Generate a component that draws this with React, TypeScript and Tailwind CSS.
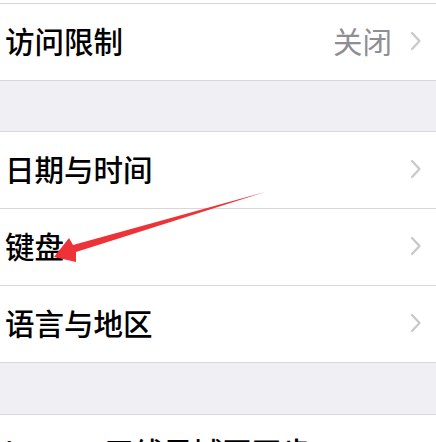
import React from "react";

const Chevron = () => (
  <svg width="12" height="20" viewBox="0 0 12 20" className="shrink-0">
    <path d="M2 2 L9.5 10 L2 18" fill="none" stroke="#c7c7cc" strokeWidth="2.2" strokeLinecap="round" strokeLinejoin="round" />
  </svg>
);

const Row = ({ label, value, last }: { label: string; value?: string; last?: boolean }) => (
  <div className={`flex h-[77px] items-center justify-between bg-white pb-[3px] pl-[5px] pr-[14px] ${last ? "" : "border-b border-[#d8d8dc]"}`}>
    <span className="text-[29.5px] font-medium leading-none text-black">{label}</span>
    <div className="flex items-center gap-[18px]">
      {value && <span className="text-[29.5px] leading-none text-[#8e8e93]">{value}</span>}
      <Chevron />
    </div>
  </div>
);

export default function App() {
  return (
    <div
      className="relative h-[442px] w-[436px] overflow-hidden bg-[#efeff4]"
      style={{ fontFamily: '"Noto Sans CJK SC", "Noto Sans", sans-serif' }}
    >
      <div className="h-[4px] border-b border-[#d8d8dc] bg-white" />
      <Row label="访问限制" value="关闭" />
      <div className="h-[50px]" />
      <div className="border-t border-[#d8d8dc]">
        <Row label="日期与时间" />
        <Row label="键盘" />
        <Row label="语言与地区" />
      </div>
      <div className="h-[51px]" />
      <div className="border-t border-[#d8d8dc]">
        <Row label="iTunes 无线局域网同步" last />
      </div>
      <svg className="pointer-events-none absolute left-0 top-0" width="436" height="442" viewBox="0 0 436 442">
        <polygon points="54,257 69,238 73,245 265,192 76,252 76,262" fill="#ee3338" />
      </svg>
    </div>
  );
}
